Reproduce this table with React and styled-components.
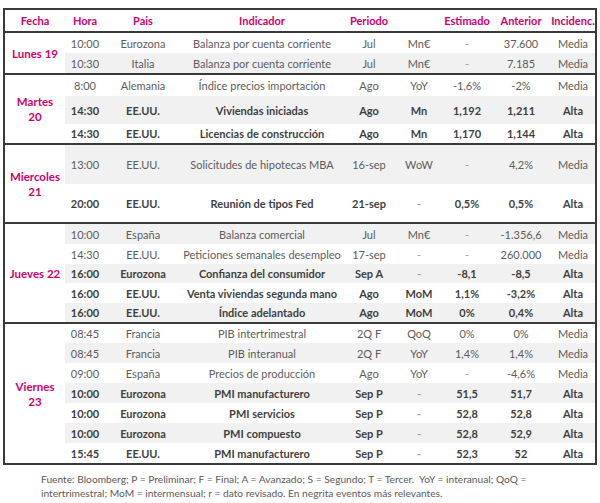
import React from 'react';
import styled, { createGlobalStyle } from 'styled-components';

const Global = createGlobalStyle`
  html, body { margin: 0; padding: 0; background: #ffffff; }
  body { padding: 8px 0 0 3px; font-family: Lato, "Open Sans", sans-serif; }
`;

const PINK = '#d0006f';

const Table = styled.table`
  width: 594px;
  table-layout: fixed;
  border-collapse: separate;
  border-spacing: 0;
  border: 2px solid #3a3a3a;
  font-size: 11px;
  color: #5a5a5a;
`;

const HeadRow = styled.tr`
  height: 21px;
`;

const Th = styled.th`
  padding: 0;
  font-weight: 700;
  color: ${PINK};
  text-align: center;
  vertical-align: middle;
  background: #ffffff;
`;

const Row = styled.tr`
  height: ${(p) => p.$h}px;
`;

const Td = styled.td`
  padding: 0;
  text-align: center;
  vertical-align: middle;
  white-space: nowrap;
  overflow: visible;
  background: ${(p) => (p.$shade ? '#f1f1f1' : '#ffffff')};
  font-weight: ${(p) => (p.$bold ? 700 : 400)};
  color: ${(p) => (p.$dash ? '#9a9a9a' : p.$bold ? '#3f3f3f' : '#5c5c5c')};
  border-top: ${(p) => (p.$first ? '2px solid #3a3a3a' : 'none')};
`;

const DayCell = styled.td`
  padding: 0;
  text-align: center;
  vertical-align: middle;
  background: #ffffff;
  color: ${PINK};
  font-weight: 700;
  font-size: 11.5px;
  line-height: 15px;
  border-top: 2px solid #3a3a3a;
`;

const Footer = styled.p`
  margin: 7px 0 0 38px;
  font-size: 10.2px;
  line-height: 14px;
  color: #5a5a5a;
`;

const days = [
  {
    label: ['Lunes 19'],
    rows: [
      { h: 22, t: '10:00', c: 'Eurozona', i: 'Balanza por cuenta corriente', p: 'Jul', u: 'Mn€', e: '-', a: '37.600', inc: 'Media' },
      { h: 20, s: 1, t: '10:30', c: 'Italia', i: 'Balanza por cuenta corriente', p: 'Jul', u: 'Mn€', e: '-', a: '7.185', inc: 'Media' },
    ],
  },
  {
    label: ['Martes', '20'],
    rows: [
      { h: 23, t: '8:00', c: 'Alemania', i: 'Índice precios importación', p: 'Ago', u: 'YoY', e: '-1,6%', a: '-2%', inc: 'Media' },
      { h: 28, s: 1, b: 1, t: '14:30', c: 'EE.UU.', i: 'Viviendas iniciadas', p: 'Ago', u: 'Mn', e: '1,192', a: '1,211', inc: 'Alta' },
      { h: 19, b: 1, t: '14:30', c: 'EE.UU.', i: 'Licencias de construcción', p: 'Ago', u: 'Mn', e: '1,170', a: '1,144', inc: 'Alta' },
    ],
  },
  {
    label: ['Miercoles', '21'],
    rows: [
      { h: 41, s: 1, t: '13:00', c: 'EE.UU.', i: 'Solicitudes de hipotecas MBA', p: '16-sep', u: 'WoW', e: '-', a: '4,2%', inc: 'Media' },
      { h: 38, b: 1, t: '20:00', c: 'EE.UU.', i: 'Reunión de tipos Fed', p: '21-sep', u: '-', e: '0,5%', a: '0,5%', inc: 'Alta' },
    ],
  },
  {
    label: ['Jueves 22'],
    rows: [
      { h: 22, s: 1, t: '10:00', c: 'España', i: 'Balanza comercial', p: 'Jul', u: 'Mn€', e: '-', a: '-1.356,6', inc: 'Media' },
      { h: 20, t: '14:30', c: 'EE.UU.', i: 'Peticiones semanales desempleo', p: '17-sep', u: '-', e: '-', a: '260.000', inc: 'Media' },
      { h: 19, s: 1, b: 1, t: '16:00', c: 'Eurozona', i: 'Confianza del consumidor', p: 'Sep A', u: '-', e: '-8,1', a: '-8,5', inc: 'Alta' },
      { h: 20, b: 1, t: '16:00', c: 'EE.UU.', i: 'Venta viviendas segunda mano', p: 'Ago', u: 'MoM', e: '1,1%', a: '-3,2%', inc: 'Alta' },
      { h: 19, s: 1, b: 1, t: '16:00', c: 'EE.UU.', i: 'Índice adelantado', p: 'Ago', u: 'MoM', e: '0%', a: '0,4%', inc: 'Alta' },
    ],
  },
  {
    label: ['Viernes', '23'],
    rows: [
      { h: 21, t: '08:45', c: 'Francia', i: 'PIB intertrimestral', p: '2Q F', u: 'QoQ', e: '0%', a: '0%', inc: 'Media' },
      { h: 20, s: 1, t: '08:45', c: 'Francia', i: 'PIB interanual', p: '2Q F', u: 'YoY', e: '1,4%', a: '1,4%', inc: 'Media' },
      { h: 20, t: '09:00', c: 'España', i: 'Precios de producción', p: 'Ago', u: 'YoY', e: '-', a: '-4,6%', inc: 'Media' },
      { h: 20, s: 1, b: 1, t: '10:00', c: 'Eurozona', i: 'PMI manufacturero', p: 'Sep P', u: '-', e: '51,5', a: '51,7', inc: 'Alta' },
      { h: 20, b: 1, t: '10:00', c: 'Eurozona', i: 'PMI servicios', p: 'Sep P', u: '-', e: '52,8', a: '52,8', inc: 'Alta' },
      { h: 20, s: 1, b: 1, t: '10:00', c: 'Eurozona', i: 'PMI compuesto', p: 'Sep P', u: '-', e: '52,8', a: '52,9', inc: 'Alta' },
      { h: 20, b: 1, t: '15:45', c: 'EE.UU.', i: 'PMI manufacturero', p: 'Sep P', u: '-', e: '52,3', a: '52', inc: 'Alta' },
    ],
  },
];

const cols = [60, 40, 76, 162, 52, 48, 48, 60, 44];
const keys = ['t', 'c', 'i', 'p', 'u', 'e', 'a', 'inc'];

export default function App() {
  return (
    <>
      <Global />
      <Table>
        <colgroup>
          {cols.map((w, i) => (
            <col key={i} style={{ width: w }} />
          ))}
        </colgroup>
        <thead>
          <HeadRow>
            <Th>Fecha</Th>
            <Th>Hora</Th>
            <Th>Pais</Th>
            <Th>Indicador</Th>
            <Th>Periodo</Th>
            <Th></Th>
            <Th>Estimado</Th>
            <Th>Anterior</Th>
            <Th>Incidenc.</Th>
          </HeadRow>
        </thead>
        {days.map((d, di) => (
          <tbody key={di}>
            {d.rows.map((r, ri) => (
              <Row key={ri} $h={r.h}>
                {ri === 0 && (
                  <DayCell rowSpan={d.rows.length}>
                    {d.label.map((l, li) => (
                      <div key={li}>{l}</div>
                    ))}
                  </DayCell>
                )}
                {keys.map((k) => (
                  <Td
                    key={k}
                    $first={ri === 0}
                    $shade={!!r.s}
                    $bold={!!r.b}
                    $dash={r[k] === '-'}
                  >
                    {r[k]}
                  </Td>
                ))}
              </Row>
            ))}
          </tbody>
        ))}
      </Table>
      <Footer>
        Fuente: Bloomberg; P = Preliminar; F = Final; A = Avanzado; S = Segundo; T = Tercer.&nbsp; YoY = interanual; QoQ =
        <br />
        intertrimestral; MoM = intermensual; r = dato revisado. En negrita eventos más relevantes.
      </Footer>
    </>
  );
}
